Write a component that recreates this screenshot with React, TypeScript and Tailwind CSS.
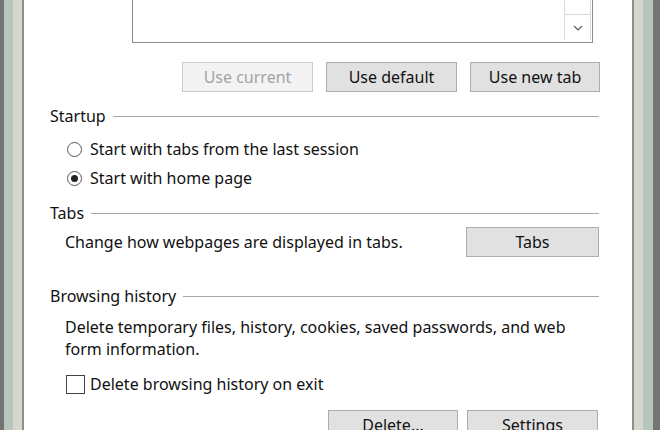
import React from "react";

const font = { fontFamily: '"Noto Sans", "Open Sans", sans-serif' };

function Btn({ children, disabled, w }: { children: React.ReactNode; disabled?: boolean; w: string }) {
  return (
    <div
      className={
        "h-[30px] flex items-center justify-center border text-[16px] " +
        w +
        (disabled
          ? " border-[#cccccc] bg-[#f3f3f3] text-[#a3a3a3]"
          : " border-[#adadad] bg-[#e1e1e1] text-[#111111]")
      }
    >
      {children}
    </div>
  );
}

function Header({ label }: { label: string }) {
  return (
    <div className="flex items-center h-[20px] pl-[26px] pr-[33px]">
      <span className="text-[16px] text-[#111111] leading-none">{label}</span>
      <div className="flex-1 ml-[7px] h-px bg-[#a8a8a8]" />
    </div>
  );
}

function Radio({ checked, label }: { checked?: boolean; label: string }) {
  return (
    <div className="flex items-center h-[24px] pl-[43px]">
      <div className="w-[15px] h-[15px] rounded-full border border-[#555555] bg-white flex items-center justify-center">
        {checked && <div className="w-[7px] h-[7px] rounded-full bg-[#222222]" />}
      </div>
      <span className="ml-[8px] text-[16px] text-[#111111]">{label}</span>
    </div>
  );
}

export default function App() {
  return (
    <div className="w-[660px] h-[430px] overflow-hidden flex bg-white" style={font}>
      <div className="w-[4px] bg-[#747474]" />
      <div className="w-[9px] bg-[#b6c6be]" />
      <div className="w-[9px] bg-[#d7d6ce]" />
      <div className="w-[2px] bg-[#8e8e8e]" />
      <div className="flex-1 flex flex-col bg-white">
        <div className="flex pl-[108px] pr-[39px]">
          <div className="flex-1 h-[43px] border-x border-b border-[#8a8a8a] flex justify-end pr-px pb-[2px]">
            <div className="w-[27px] border-l border-r border-[#dadada] flex flex-col">
              <div className="h-[15px] border-b border-[#dadada]" />
              <div className="flex-1 flex items-center justify-center">
                <svg width="10" height="6" viewBox="0 0 10 6">
                  <path d="M1 1 L5 5 L9 1" fill="none" stroke="#606060" strokeWidth="1.2" />
                </svg>
              </div>
            </div>
          </div>
        </div>

        <div className="mt-[19px] flex justify-end pr-[32px] gap-[13px]">
          <Btn disabled w="w-[131px]">Use current</Btn>
          <Btn w="w-[131px]">Use default</Btn>
          <Btn w="w-[130px]">Use new tab</Btn>
        </div>

        <div className="mt-[14px]">
          <Header label="Startup" />
        </div>
        <div className="mt-[11px]">
          <Radio label="Start with tabs from the last session" />
        </div>
        <div className="mt-[5px]">
          <Radio checked label="Start with home page" />
        </div>

        <div className="mt-[13px]">
          <Header label="Tabs" />
        </div>
        <div className="mt-[4px] flex items-center pl-[41px] pr-[33px]">
          <span className="flex-1 text-[16px] text-[#111111]">Change how webpages are displayed in tabs.</span>
          <Btn w="w-[133px]">Tabs</Btn>
        </div>

        <div className="mt-[29px]">
          <Header label="Browsing history" />
        </div>
        <div className="mt-[10px] pl-[41px] pr-[40px] text-[16px] leading-[22px] text-[#111111]">
          Delete temporary files, history, cookies, saved passwords, and web form information.
        </div>
        <div className="mt-[12px] flex items-center h-[24px] pl-[42px]">
          <div className="w-[19px] h-[19px] border border-[#444444] bg-white" />
          <span className="ml-[5px] text-[16px] text-[#111111]">Delete browsing history on exit</span>
        </div>
        <div className="mt-[14px] flex justify-end pr-[34px] gap-[9px]">
          <Btn w="w-[130px]">Delete...</Btn>
          <Btn w="w-[131px]">Settings</Btn>
        </div>
      </div>
      <div className="w-[2px] bg-[#8e8e8e]" />
      <div className="w-[9px] bg-[#d7d6ce]" />
      <div className="w-[10px] bg-[#b6c6be]" />
      <div className="w-[7px] bg-[#747474]" />
    </div>
  );
}
